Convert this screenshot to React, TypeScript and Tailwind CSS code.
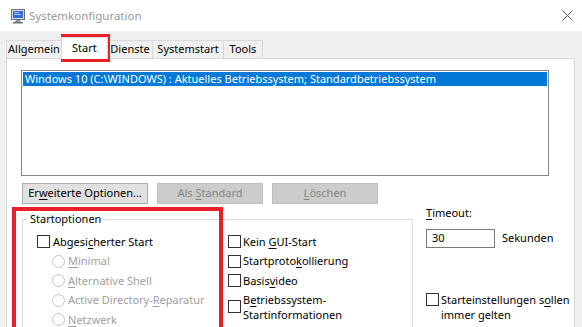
import React from "react";

const F = { fontFamily: '"Noto Sans", "Segoe UI", sans-serif' };

/* underlined access key */
const K = ({ t, k }: { t: string; k: number }) => (
  <span className="whitespace-pre">
    {t.slice(0, k)}
    <span className="underline underline-offset-2">{t[k]}</span>
    {t.slice(k + 1)}
  </span>
);

const Check = () => <span className="block w-[13px] h-[13px] shrink-0 border border-[#333] bg-white" />;
const Radio = () => <span className="block w-[13px] h-[13px] shrink-0 rounded-full border border-[#c4c4c4] bg-white" />;

const tabs = [
  { name: "Allgemein", w: "w-[56px]" },
  { name: "Start", w: "w-[47px]", on: true },
  { name: "Dienste", w: "w-[46px]" },
  { name: "Systemstart", w: "w-[72px]" },
  { name: "Tools", w: "w-[40px]" },
];

const AppIcon = () => (
  <svg width="16" height="16" viewBox="0 0 16 16">
    <rect x="1.5" y="1.5" width="13" height="10" fill="#d9dde3" stroke="#6b7380" />
    <rect x="3" y="3" width="10" height="7" fill="#2f6fd1" />
    <path d="M4 4h5v1H4z M4 6h7v1H4z" fill="#9fc4ff" />
    <path d="M6 12h4l1 2H5z" fill="#8a919c" />
    <rect x="3" y="14" width="10" height="1.5" fill="#6b7380" />
  </svg>
);

export default function App() {
  return (
    <div className="relative w-[582px] h-[327px] overflow-hidden bg-[#f0f0f0] text-[11px] text-black" style={F}>
      {/* title bar */}
      <div className="h-[31px] bg-white flex items-center pl-[10px] pr-[9px]">
        <AppIcon />
        <span className="ml-[3px] text-[11.5px] text-[#999]">Systemkonfiguration</span>
        <svg className="ml-auto" width="11" height="11" viewBox="0 0 11 11">
          <path d="M0.5 0.5l10 10M10.5 0.5l-10 10" stroke="#555" strokeWidth="1" />
        </svg>
      </div>

      {/* tabs */}
      <div className="flex items-end h-[27px] pl-[6px]">
        {tabs.map((t) =>
          t.on ? (
            <div key={t.name} className={`${t.w} h-[22px] bg-white border border-b-0 border-[#d9d9d9] -mb-px -ml-px z-10 flex items-start pt-[2px] pl-[10px]`}>
              {t.name}
            </div>
          ) : (
            <div key={t.name} className={`${t.w} h-[18px] bg-[#f0f0f0] border border-b-0 border-[#d9d9d9] -ml-px first:ml-0 flex items-center justify-center`}>
              {t.name}
            </div>
          )
        )}
      </div>

      {/* tab page */}
      <div className="ml-[6px] w-[569px] h-[300px] bg-white border border-[#d9d9d9] pt-[11px] pl-[14px]">
        <div className="w-[528px] h-[106px] border border-[#828790] p-px">
          <div className="h-[14px] bg-[#0078d7] text-white leading-[14px] pl-[2px] whitespace-nowrap">
            Windows 10 (C:\WINDOWS) : Aktuelles Betriebssystem; Standardbetriebssystem
          </div>
        </div>

        <div className="flex mt-[7px] ml-px gap-[9px]">
          <div className="w-[126px] h-[21px] border border-[#adadad] bg-[#e1e1e1] flex items-center justify-center">
            <K t="Erweiterte Optionen..." k={2} />
          </div>
          <div className="w-[106px] h-[21px] border border-[#bfbfbf] bg-[#cccccc] text-[#838383] flex items-center justify-center">
            <K t="Als Standard" k={4} />
          </div>
          <div className="w-[106px] h-[21px] border border-[#bfbfbf] bg-[#cccccc] text-[#838383] flex items-center justify-center">
            <K t="Löschen" k={0} />
          </div>
        </div>

        <div className="flex mt-[8px]">
          {/* group box */}
          <div className="relative w-[391px] h-[140px] mt-[7px] ml-px border border-[#dcdcdc]">
            <span className="absolute -top-[9px] left-[5px] bg-white px-[2px] leading-[16px]">Startoptionen</span>
            <div className="flex pt-[12px] pl-[14px]">
              <div className="w-[191px] flex flex-col">
                <div className="h-[19.5px] flex items-center gap-[3px]">
                  <Check />
                  <K t="Abgesicherter Start" k={6} />
                </div>
                {[
                  ["Minimal", 0],
                  ["Alternative Shell", 0],
                  ["Active Directory-Reparatur", 17],
                  ["Netzwerk", 0],
                ].map(([t, k]) => (
                  <div key={t as string} className="h-[19.5px] flex items-center gap-[3px] pl-[15px] text-[#a0a0a0]">
                    <Radio />
                    <K t={t as string} k={k as number} />
                  </div>
                ))}
              </div>
              <div className="flex flex-col">
                {[
                  ["Kein GUI-Start", 5],
                  ["Startprotokollierung", 10],
                  ["Basisvideo", 5],
                ].map(([t, k]) => (
                  <div key={t as string} className="h-[19.5px] flex items-center gap-[2px]">
                    <Check />
                    <K t={t as string} k={k as number} />
                  </div>
                ))}
                <div className="flex items-center gap-[2px] mt-[1px]">
                  <Check />
                  <div className="flex flex-col leading-[15px]">
                    <K t="Betriebssystem-" k={1} />
                    <span>Startinformationen</span>
                  </div>
                </div>
              </div>
            </div>
          </div>

          {/* timeout */}
          <div className="ml-[13px] -mt-[7px] flex flex-col">
            <span className="leading-[16px]"><K t="Timeout:" k={0} /></span>
            <div className="flex items-center mt-[8px]">
              <div className="w-[69px] h-[19px] border border-[#7a7a7a] bg-white flex items-center pl-[5px]">30</div>
              <span className="ml-[7px]">Sekunden</span>
            </div>
            <div className="flex items-start gap-[2px] mt-[44px]">
              <span className="mt-[1px]"><Check /></span>
              <div className="flex flex-col leading-[15px] whitespace-nowrap">
                <span>
                  Starteinstellungen s<span className="underline underline-offset-2">o</span>llen
                </span>
                <span>immer gelten</span>
              </div>
            </div>
          </div>
        </div>
      </div>

      {/* red highlight frames */}
      <div className="absolute left-[61px] top-[34px] w-[49px] h-[28px] border-4 border-[#e8202a] pointer-events-none" />
      <div className="absolute left-[12px] top-[207px] w-[211px] h-[124px] border-4 border-[#e8202a] pointer-events-none" />
    </div>
  );
}
